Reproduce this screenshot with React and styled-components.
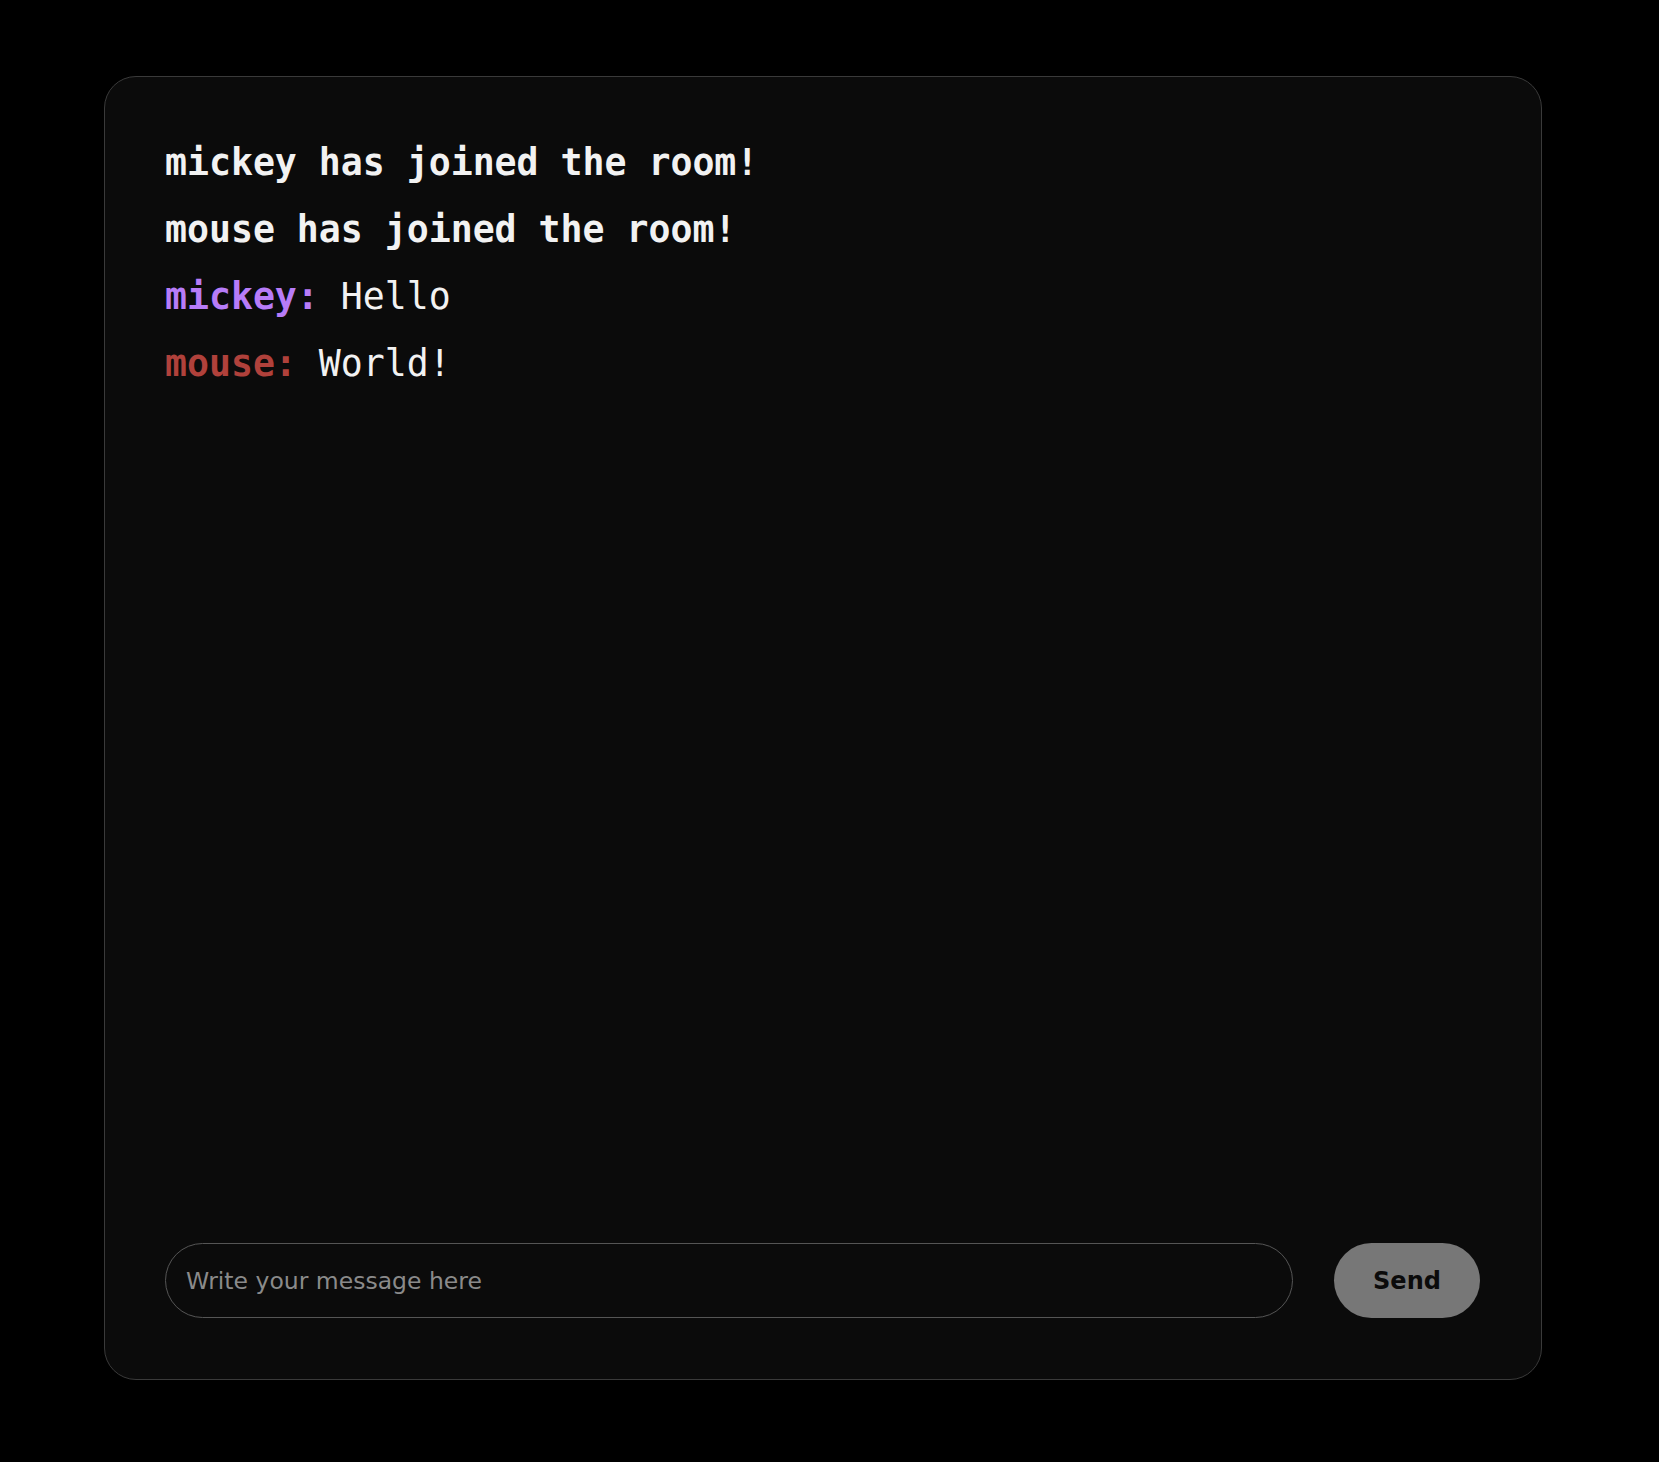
import React from "react";
import styled, { createGlobalStyle } from "styled-components";

const Global = createGlobalStyle`
  html, body { margin: 0; padding: 0; background: #000; }
  body { font-family: "DejaVu Sans", sans-serif; }
`;

const Page = styled.div`
  min-height: 1462px;
  box-sizing: border-box;
  padding: 76px 117px 82px 104px;
  display: flex;
`;

const Card = styled.div`
  flex: 1;
  display: flex;
  flex-direction: column;
  background: #0b0b0b;
  border: 1px solid #3a3a3a;
  border-radius: 32px;
  padding: 52px 61px 61px 60px;
`;

const Messages = styled.div`
  flex: 1;
  display: flex;
  flex-direction: column;
`;

const Line = styled.p`
  margin: 0;
  font-family: "DejaVu Sans Mono", monospace;
  font-size: 36.5px;
  line-height: 67px;
  color: #f2f2f2;
  font-weight: ${(p) => (p.$notice ? 700 : 400)};
  white-space: pre;
`;

const Name = styled.span`
  font-weight: 700;
  color: ${(p) => p.$color};
`;

const Composer = styled.form`
  display: flex;
  gap: 41px;
  align-items: stretch;
`;

const Input = styled.input`
  flex: 1;
  height: 75px;
  box-sizing: border-box;
  background: transparent;
  border: 1.5px solid #555;
  border-radius: 38px;
  padding: 0 20px;
  font-family: "DejaVu Sans", sans-serif;
  font-size: 23.5px;
  color: #ddd;
  outline: none;
  &::placeholder { color: #8a8a8a; }
`;

const SendButton = styled.button`
  width: 146px;
  height: 75px;
  border: none;
  border-radius: 38px;
  background: #777;
  color: #0b0b0b;
  font-family: "DejaVu Sans", sans-serif;
  font-weight: 700;
  font-size: 24px;
  cursor: pointer;
`;

export default function App() {
  return (
    <>
      <Global />
      <Page>
        <Card>
          <Messages>
            <Line $notice>mickey has joined the room!</Line>
            <Line $notice>mouse has joined the room!</Line>
            <Line>
              <Name $color="#b77cf8">mickey:</Name> Hello
            </Line>
            <Line>
              <Name $color="#b0413b">mouse:</Name> World!
            </Line>
          </Messages>
          <Composer onSubmit={(e) => e.preventDefault()}>
            <Input placeholder="Write your message here" />
            <SendButton type="submit">Send</SendButton>
          </Composer>
        </Card>
      </Page>
    </>
  );
}
